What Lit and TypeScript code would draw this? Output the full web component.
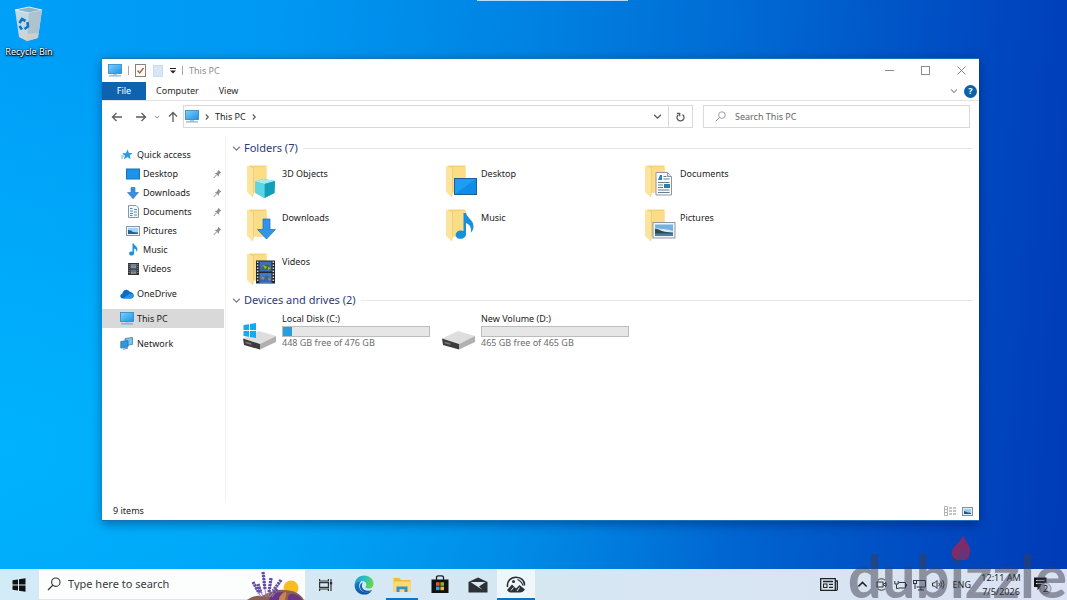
import { LitElement, html, css, nothing, TemplateResult } from "lit";
import { customElement, property } from "lit/decorators.js";

const monitor = (w = 14, h = 13) => html`<svg width=${w} height=${h} viewBox="0 0 14 13" aria-hidden="true">
  <defs><linearGradient id="scr" x1="0" y1="0" x2="1" y2="1"><stop offset="0" stop-color="#7fd0fb" /><stop offset="1" stop-color="#1c93e6" /></linearGradient></defs>
  <rect x="0.5" y="0.5" width="13" height="9" fill="url(#scr)" stroke="#2b86c5" stroke-width="0.8" />
  <rect x="5" y="10" width="4" height="1.4" fill="#b9c9d6" />
  <rect x="1" y="11.4" width="12" height="1" fill="#6f9dbd" />
</svg>`;

const navIcons: Record<string, TemplateResult> = {
  star: html`<svg width="12" height="12" viewBox="0 0 12 12"><path d="M6.600 0.600l1.300 3.300 3.600.1-2.700 2.400.9 3.900-3.200-2.200L2.800 10.600 4 6.700 1 4.600l3.900-.5z" fill="#2d9be0" /><path d="M0 7h3M0 9h2" stroke="#6ab8e8" stroke-width="1" /></svg>`,
  desktop: html`<svg width="14" height="12" viewBox="0 0 14 12"><rect x="0.500" y="1" width="13" height="10" fill="#1c93ea" stroke="#1473b8" /></svg>`,
  download: html`<svg width="12" height="12" viewBox="0 0 12 12"><path d="M4 0.500h4v5h3.500L6 11.700.5 5.500H4z" fill="#3a8fdc" stroke="#2374bd" stroke-width="0.600" /></svg>`,
  document: html`<svg width="11" height="13" viewBox="0 0 11 13"><path d="M0.500 0.500h7.500l2.500 2.500v9.500H0.500z" fill="#f4f8fb" stroke="#8897a3" /><path d="M2 3.500h2.500M6 4.500h3M2 6h3M6 7h3M2 8.500h3M6 10h3M2 10.500h2.500" stroke="#4c8cb5" /></svg>`,
  picture: html`<svg width="14" height="10" viewBox="0 0 14 10"><rect x="0.500" y="0.500" width="13" height="9" fill="#eef4f8" stroke="#8897a3" /><rect x="2" y="2" width="10" height="6" fill="#a9d2ef" /><path d="M2 4l3 .5 2 1.500 5 .5v1.500H2z" fill="#1f6297" /></svg>`,
  music: html`<svg width="11" height="13" viewBox="0 0 11 13"><path d="M4.500 0.500h1.200c.4 2 3.800 2.800 3.800 6 0 1-.4 1.800-1 2.500.2-2-.8-3-2.400-3.600v5c0 1.200-1.200 2.100-2.600 2.100S1 11.700 1 10.600s1.100-2 2.400-2c.4 0 .8.1 1.100.2z" fill="#1a93dc" /></svg>`,
  video: html`<svg width="11" height="12" viewBox="0 0 11 12"><rect width="11" height="12" fill="#2f3338" /><rect x="2.500" y="1" width="6" height="4.500" fill="#6d83a3" /><rect x="2.500" y="6.500" width="6" height="4.500" fill="#58719b" /><path d="M3 3l3 1 2-1.500v2.500H3zM3 9l3 .5 2-1v2H3z" fill="#b08c55" /><path d="M1.200 1v10M9.800 1v10" stroke="#aaa" stroke-width="0.800" stroke-dasharray="1 1" /></svg>`,
  cloud: html`<svg width="14" height="10" viewBox="0 0 14 10"><path d="M3 9.500C1.200 9.500.3 8.400.3 7.100.3 5.900 1.200 5 2.300 4.800 2.500 2.500 4.100.8 6.300.8c1.700 0 2.900.9 3.500 2.300 2.100 0 3.900 1.400 3.900 3.400 0 1.700-1.200 3-2.900 3z" fill="#0f6cc4" /><path d="M3 9.500l6.500-4.700c2.500-.2 4.200 1 4.200 2.300 0 1.500-1.300 2.400-2.900 2.400z" fill="#2496e8" /></svg>`,
  pc: monitor(),
  network: html`<svg width="14" height="13" viewBox="0 0 14 13"><path d="M5 1.500l7.500-1v7l-7.500 1z" fill="#7cc4ee" stroke="#3584b8" stroke-width="0.800" /><path d="M0.800 4.500l7.200-1v6.500l-7.200 1z" fill="#2f97dc" stroke="#2474ad" stroke-width="0.800" /><path d="M3 12.200l5-1" stroke="#5a8fb3" /></svg>`,
};

const folderBase = html`
  <svg width="34" height="36" viewBox="0 0 34 36">
    <path d="M3 1.500h17.500v27H3z" fill="#f6d272" />
    <path d="M8 3h12.500v25.500H8z" fill="#fbdd88" />
    <path d="M1 1.500l6.500 3v24l-1 4.500L1 28z" fill="#fde49c" />
    <path d="M7.500 4.500v24l-1 4.500" fill="none" stroke="#ecca74" stroke-width="0.700" />
  </svg>`;

const overlays: Record<string, TemplateResult> = {
  cube: html`<svg width="34" height="36" viewBox="0 0 34 36"><path d="M9.500 17.500l8-2.500 11.500 2-.5 12-10 5-9-5z" fill="#35bfd3" /><path d="M9.500 17.500l8-2.500 11.500 2-10.500 3z" fill="#a3edf4" /><path d="M18.500 20l10.500-3-.5 12-10 5z" fill="#149fb9" /><path d="M9.500 17.500l9 2.500v14l-9-5z" fill="#5cd5e4" /></svg>`,
  desktop: html`<svg width="34" height="36" viewBox="0 0 34 36"><rect x="9.500" y="14.500" width="22" height="16" fill="#1f9cf3" stroke="#1b5f94" /><path d="M10 30L31 15v15z" fill="#0f8ce8" /></svg>`,
  document: html`<svg width="34" height="36" viewBox="0 0 34 36"><path d="M12 8.500h11.500l4 4V31H12z" fill="#fbfdfe" stroke="#8d979f" /><path d="M23.500 8.500v4h4" fill="#dbe3e8" stroke="#8d979f" /><path d="M14 16l2-5h2v5z" fill="#3384ae" /><path d="M19.500 12.500h3M19.500 15h6M14 18.500h11.500M14 21h5M14 23.500h5M14 26h11.500M14 28.500h11.500" stroke="#5c7f96" /><rect x="20" y="20" width="6" height="4" fill="#2d7da6" /></svg>`,
  download: html`<svg width="34" height="36" viewBox="0 0 34 36"><path d="M17 11h7v10.500h5.500L20.500 31 11.500 21.500H17z" fill="#3393e4" stroke="#2377c0" stroke-width="0.800" /></svg>`,
  music: html`<svg width="34" height="36" viewBox="0 0 34 36"><path d="M18.500 5h2.500c1 5 7.500 7 7.500 13.500 0 2.500-1 4.500-2.500 6 .5-5-1-8-5-9.500v11c0 3-2.500 4.800-5.500 4.800s-4.800-1.500-4.800-3.900c0-2.500 2.300-4.400 5.200-4.400 1 0 1.900.2 2.600.6z" fill="#1790dc" /></svg>`,
  picture: html`<svg width="34" height="36" viewBox="0 0 34 36"><rect x="9" y="14.500" width="22" height="15.500" fill="#f1f4f6" stroke="#8d979f" /><rect x="11" y="16.500" width="18" height="11.500" fill="#77afe0" /><path d="M11 19.500c4 2 8 .5 18 3.500v1H11z" fill="#d5e9f5" /><path d="M11 20.500c3 0 6 3 12 3.500l6 1v3H11z" fill="#2c4d4e" /><path d="M11 25.500h18V28H11z" fill="#4c7f9e" /></svg>`,
  video: html`<svg width="34" height="36" viewBox="0 0 34 36"><rect x="10" y="8.500" width="19" height="23" fill="#23262b" /><rect x="13.500" y="9.500" width="12" height="10" fill="#3c6fb5" /><rect x="13.500" y="21" width="12" height="10" fill="#4379c2" /><path d="M14 17l4-2 2-3 3 1 2 5H14z" fill="#2c7a41" /><path d="M17 13l4 2-2 2zM22 15l3 1-3 2z" fill="#d8a428" /><path d="M14 28l4-2 2-3 3 2 2 5H14z" fill="#34679d" /><path d="M15 25l4 1-2 2zM22 26l3 1-2 2z" fill="#c58a3a" /><path d="M11.700 9.500v21M27.300 9.500v21" stroke="#d5d9dd" stroke-width="1.500" stroke-dasharray="1.500 1.500" /></svg>`,
};

const driveIcon = (windows: boolean) => html`<svg width="36" height="32" viewBox="0 0 36 32" aria-hidden="true">
  <path d="M1 18.500L17 11l17 5-16 8z" fill="#dedede" />
  <path d="M1 18.500L18 24v5.500L2 25z" fill="#3b3b3b" />
  <path d="M18 24l16-8v6l-16 7.500z" fill="#b0b0b0" />
  <path d="M3.500 21.500l6 1.700v1.800l-6-1.700z" fill="#777" />
  ${windows
    ? html`<svg width="36" height="32" viewBox="0 0 36 32"><path d="M1.500 5L7 4.200v5.800H1.500zM8 4L14 3v7H8zM1.500 11H7v5.800l-5.500-.8zM8 11h6v7l-6-1z" fill="#12aaf0" /></svg>`
    : nothing}
</svg>`;

const pin = html`<svg width="9" height="10" viewBox="0 0 9 10" aria-hidden="true"><path d="M5.200 0.700l3.200 3-1 .4-1.300 1.500-.2 2.100L1.700 3.900l2.100-.2L5 1.900z" fill="#8a9299" /><path d="M3.400 6L0.800 9" stroke="#8a9299" /></svg>`;

const chevron = (dir: "right" | "down" | "up", size = 8) => {
  const d = { right: "M2.800 1.500l2.500 2.500-2.500 2.500", down: "M1 2.500l3 3 3-3", up: "M1 5.500l3-3 3 3" }[dir];
  return html`<svg width=${size} height=${size} viewBox="0 0 8 8" aria-hidden="true"><path d=${d} fill="none" stroke="currentColor" stroke-width="1.100" /></svg>`;
};

const arrow = (rot: number) => html`<svg width="12" height="12" viewBox="0 0 12 12" aria-hidden="true"><path transform="rotate(${rot} 6 6)" d="M11 6H1.500M5.500 2l-4 4 4 4" fill="none" stroke="#5c5c5c" stroke-width="1.300" /></svg>`;

const magnifier = (size: number, color: string) => html`<svg width=${size} height=${size} viewBox="0 0 14 14" aria-hidden="true"><circle cx="8.800" cy="5.200" r="4.200" fill="none" stroke=${color} stroke-width="1.100" /><path d="M5.800 8.300L1 13" stroke=${color} stroke-width="1.200" /></svg>`;

interface NavEntry { label: string; icon: string; pinned?: boolean; child?: boolean; selected?: boolean; }

const navGroups: NavEntry[][] = [
  [
    { label: "Quick access", icon: "star" },
    { label: "Desktop", icon: "desktop", pinned: true, child: true },
    { label: "Downloads", icon: "download", pinned: true, child: true },
    { label: "Documents", icon: "document", pinned: true, child: true },
    { label: "Pictures", icon: "picture", pinned: true, child: true },
    { label: "Music", icon: "music", child: true },
    { label: "Videos", icon: "video", child: true },
  ],
  [{ label: "OneDrive", icon: "cloud" }],
  [{ label: "This PC", icon: "pc", selected: true }],
  [{ label: "Network", icon: "network" }],
];

const folders = [
  { label: "3D Objects", icon: "cube" },
  { label: "Desktop", icon: "desktop" },
  { label: "Documents", icon: "document" },
  { label: "Downloads", icon: "download" },
  { label: "Music", icon: "music" },
  { label: "Pictures", icon: "picture" },
  { label: "Videos", icon: "video" },
];

const drives = [
  { label: "Local Disk (C:)", free: 448, total: 476, windows: true },
  { label: "New Volume (D:)", free: 465, total: 465, windows: false },
];

const reset = css`
  * { box-sizing: border-box; }
  svg { display: block; flex: none; overflow: visible; }
  button, input { font: inherit; color: inherit; border: 0; padding: 0; margin: 0; background: none; outline: none; }
  button { display: flex; align-items: center; justify-content: center; flex: none; }
  a { color: inherit; text-decoration: none; }
`;

@customElement("nav-pane")
export class NavPane extends LitElement {
  static styles = [reset, css`
    :host { display: block; border-right: 1px solid #f3f3f3; padding-top: 9px; }
    .groups { display: flex; flex-direction: column; gap: 6px; }
    .row { display: flex; align-items: center; height: 19px; gap: 3px; padding: 0 2px 0 18px; margin-right: 1px; }
    .child { padding-left: 24px; }
    .selected { background: #d9d9d9; }
    .icon { width: 14px; display: flex; justify-content: center; flex: none; }
    .label { flex: 1; white-space: nowrap; }
  `];

  render() {
    return html`<nav class="groups" aria-label="Navigation">
      ${navGroups.map((g) => html`<div>${g.map((e) => html`
        <a href="#" class="row ${e.child ? "child" : ""} ${e.selected ? "selected" : ""}">
          <span class="icon">${navIcons[e.icon]}</span>
          <span class="label">${e.label}</span>
          ${e.pinned ? pin : nothing}
        </a>`)}</div>`)}
    </nav>`;
  }
}

@customElement("drive-tile")
export class DriveTile extends LitElement {
  @property() label = "";
  @property({ type: Number }) free = 0;
  @property({ type: Number }) total = 1;
  @property({ type: Boolean }) windows = false;

  static styles = [reset, css`
    :host { display: block; }
    .tile { display: flex; gap: 4px; height: 44px; }
    .art { padding-top: 9px; }
    .info { width: 148px; line-height: 12px; padding-top: 2px; white-space: nowrap; }
    .bar { height: 11px; border: 1px solid #bcbcbc; background: #e6e6e6; margin-top: 1px; }
    .used { height: 100%; background: #26a0da; }
    .free { color: #6d6d6d; }
  `];

  render() {
    const used = ((this.total - this.free) / this.total) * 100;
    return html`<a href="#" class="tile">
      <span class="art">${driveIcon(this.windows)}</span>
      <div class="info">
        <div>${this.label}</div>
        <div class="bar"><div class="used" style="width:${used}%"></div></div>
        <div class="free">${this.free} GB free of ${this.total} GB</div>
      </div>
    </a>`;
  }
}

@customElement("explorer-window")
export class ExplorerWindow extends LitElement {
  static styles = [reset, css`
    :host { display: flex; flex-direction: column; background: #fff; color: #1c1c1c; border: 1px solid #1673b5; border-width: 1px 0; box-shadow: 0 3px 10px rgba(0, 10, 60, 0.4); }
    .title { display: flex; align-items: center; height: 23px; padding-left: 6px; color: #8d8d8d; gap: 6px; flex: none; }
    .sep { width: 1px; height: 9px; background: #a5a5a5; }
    .qat { display: flex; align-items: center; gap: 7px; }
    .controls { display: flex; margin-left: auto; }
    .controls button { width: 36px; height: 22px; }
    .tabs { display: flex; height: 19px; border-bottom: 1px solid #e2e2e2; flex: none; color: #2b2b2b; }
    .tabs .file { width: 44px; background: #0f62ae; color: #fff; }
    .tabs .tab { padding: 0 10px; }
    .help { margin-left: auto; display: flex; align-items: center; gap: 6px; padding-right: 2px; color: #9a9a9a; }
    .badge { width: 13px; height: 13px; border-radius: 50%; background: #0c62a8; color: #fff; font-weight: 700; }
    .address { display: flex; align-items: center; height: 31px; flex: none; padding: 0 9px; }
    .arrows { display: flex; align-items: center; gap: 7px; color: #777; padding-right: 4px; }
    .back { margin-right: 5px; }
    .crumbs { flex: 1; display: flex; align-items: center; height: 23px; border: 1px solid #d9d9d9; color: #555; padding-left: 1px; }
    .trail { flex: 1; display: flex; align-items: center; gap: 4px; }
    .here { color: #1c1c1c; }
    .drop { width: 22px; height: 21px; }
    .refresh { width: 24px; height: 21px; border-left: 1px solid #d9d9d9; }
    .search { display: flex; align-items: center; gap: 9px; width: 267px; height: 23px; border: 1px solid #d9d9d9; margin-left: 10px; padding-left: 11px; color: #666; }
    .search input { flex: 1; min-width: 0; }
    .search input::placeholder { color: #666; opacity: 1; }
    .body { display: grid; grid-template-columns: 124px 1fr; flex: 1; min-height: 0; padding-top: 4px; }
    .content { padding: 4px 6px 0 6px; min-width: 0; }
    .heading { display: flex; align-items: center; gap: 3px; height: 16px; font-size: 11px; font-weight: 400; color: #2d3a78; margin: 0; white-space: nowrap; }
    .heading svg { color: #7a7f95; }
    .rule { flex: 1; height: 1px; background: #e6e6e6; margin-left: 2px; }
    .grid { display: grid; grid-template-columns: repeat(auto-fill, 199px); padding: 4px 0 0 10px; }
    .tile { display: flex; gap: 2px; height: 44px; padding-left: 4px; }
    .art { display: grid; align-self: start; padding-top: 4px; }
    .art > svg { grid-area: 1 / 1; }
    .name { padding-top: 8px; line-height: 12px; }
    .drives { padding-top: 3px; }
    .status { display: flex; align-items: center; height: 18px; padding: 0 6px 0 11px; flex: none; }
    .views { display: flex; align-items: center; gap: 6px; margin-left: auto; }
  `];

  render() {
    return html`
      <header class="title">
        ${monitor()}<span class="sep"></span>
        <div class="qat">
          <button aria-label="Properties"><svg width="11" height="13" viewBox="0 0 11 13"><rect x="0.500" y="0.500" width="10" height="12" fill="#fff" stroke="#8a8077" /><path d="M2.500 6.500l2.200 2.500 3.800-5" fill="none" stroke="#a8613a" stroke-width="1.400" /></svg></button>
          <button aria-label="New folder"><svg width="10" height="12" viewBox="0 0 10 12"><rect x="0.500" y="0.500" width="9" height="11" fill="#d7e6f4" stroke="#cbdcea" /></svg></button>
          <button aria-label="Customize toolbar"><svg width="6" height="6" viewBox="0 0 6 6"><path d="M0 0.500h6" stroke="#222" /><path d="M0 2.500h6L3 5.500z" fill="#222" /></svg></button>
        </div>
        <span class="sep"></span><span>This PC</span>
        <div class="controls">
          <button aria-label="Minimize"><svg width="9" height="9" viewBox="0 0 9 9"><path d="M0 4.500h9" stroke="#8a8a8a" /></svg></button>
          <button aria-label="Maximize"><svg width="9" height="9" viewBox="0 0 9 9"><rect x="0.500" y="0.500" width="8" height="8" fill="none" stroke="#8a8a8a" /></svg></button>
          <button aria-label="Close"><svg width="9" height="9" viewBox="0 0 9 9"><path d="M0.500 0.500l8 8M8.500 0.500l-8 8" stroke="#8a8a8a" /></svg></button>
        </div>
      </header>
      <div class="tabs">
        <button class="file">File</button>
        <button class="tab">Computer</button>
        <button class="tab">View</button>
        <div class="help">${chevron("down")}<button class="badge" aria-label="Help">?</button></div>
      </div>
      <div class="address">
        <div class="arrows">
          <button class="back" aria-label="Back">${arrow(0)}</button>
          <button aria-label="Forward">${arrow(180)}</button>
          <button aria-label="Recent locations">${chevron("down", 6)}</button>
          <button aria-label="Up">${arrow(90)}</button>
        </div>
        <div class="crumbs">
          <div class="trail">${monitor()}${chevron("right")}<button class="here">This PC</button>${chevron("right")}</div>
          <button class="drop" aria-label="Previous locations">${chevron("down", 9)}</button>
          <button class="refresh" aria-label="Refresh"><svg width="9" height="10" viewBox="0 0 9 10"><path d="M6.500 2.600A3.500 3.500 0 1 1 2.500 2.600M0.800 1.300h2.900v3" fill="none" stroke="#5c5c5c" stroke-width="1.300" /></svg></button>
        </div>
        <label class="search">${magnifier(11, "#909090")}<input type="text" aria-label="Search This PC" placeholder="Search This PC" /></label>
      </div>
      <div class="body">
        <nav-pane></nav-pane>
        <main class="content">
          <h2 class="heading">${chevron("down", 9)}<span>Folders (7)</span><span class="rule"></span></h2>
          <div class="grid">
            ${folders.map((f) => html`<a href="#" class="tile"><span class="art">${folderBase}${overlays[f.icon]}</span><span class="name">${f.label}</span></a>`)}
          </div>
          <h2 class="heading">${chevron("down", 9)}<span>Devices and drives (2)</span><span class="rule"></span></h2>
          <div class="grid drives">
            ${drives.map((d) => html`<drive-tile .label=${d.label} .free=${d.free} .total=${d.total} .windows=${d.windows}></drive-tile>`)}
          </div>
        </main>
      </div>
      <footer class="status">
        <span>9 items</span>
        <div class="views">
          <button aria-label="Details view"><svg width="12" height="10" viewBox="0 0 12 10"><path d="M0.500 0.500h3v9h-3zM0.500 3.500h3M0.500 6.500h3" fill="none" stroke="#a0a0a0" stroke-width="0.800" /><path d="M5 2h3M5 5h3M5 8h3M9 2h3M9 5h3M9 8h3" stroke="#8a8a8a" /></svg></button>
          <button aria-label="Large icons view"><svg width="11" height="9" viewBox="0 0 11 9"><rect x="0.500" y="0.500" width="10" height="8" fill="#e4eff7" stroke="#7d93a4" /><rect x="2" y="2" width="7" height="5" fill="#9ccbed" /><path d="M2 4l4 1.500 3 .5v1H2z" fill="#25547c" /></svg></button>
        </div>
      </footer>`;
  }
}

@customElement("task-bar")
export class TaskBar extends LitElement {
  static styles = [reset, css`
    :host { display: flex; align-items: stretch; height: 31px; background: linear-gradient(90deg, #d2ebf7, #d6e7f2 50%, #dbe2f3); color: #222; }
    .start { width: 38px; }
    .search { display: flex; align-items: center; gap: 7px; width: 268px; background: #fcfdfd; padding-left: 8px; font-size: 11px; border: 1px solid #dfe6ea; border-width: 0 1px 1px 1px; color: #3a3a3a; }
    .search input { flex: 1; min-width: 0; }
    .search input::placeholder { color: #3a3a3a; opacity: 1; }
    .apps { display: flex; padding-left: 1px; }
    .app { width: 38px; border-bottom: 2px solid transparent; border-top: 2px solid transparent; }
    .running { background: linear-gradient(#0f73c6, #0f73c6) bottom / 32px 2px no-repeat; background-origin: border-box; }
    .active { background: linear-gradient(#0f73c6, #0f73c6) bottom / 100% 2px no-repeat, #f0f7fb; background-origin: border-box; }
    .tray { display: flex; align-items: center; margin-left: auto; padding-right: 14px; }
    .small { width: 19px; height: 31px; }
    .news { margin-right: 14px; }
    .lang { padding: 0 8px 0 5px; }
    .clock { flex-direction: column; line-height: 14px; width: 44px; }
    .notice { margin-left: 10px; }
  `];

  render() {
    return html`
      <button class="start" aria-label="Start"><svg width="14" height="14" viewBox="0 0 14 14"><path d="M0.500 2.200L6 1.400V6.500H0.500zM7 1.300L13.500 0.300V6.500H7zM0.500 7.500H6v5.100L0.500 11.800zM7 7.500h6.500v6.200L7 12.700z" fill="#111" /></svg></button>
      <label class="search">
        ${magnifier(14, "#333")}
        <input type="text" aria-label="Type here to search" placeholder="Type here to search" />
        <svg width="60" height="31" viewBox="0 0 60 31" aria-hidden="true">
          <circle cx="46" cy="19" r="7.500" fill="#f8bb22" />
          <path d="M2 31c4-3 9-5 15-4 6-3 14-7 22-6 10 0 17 4 20 10z" fill="#8e5f55" />
          <path d="M24 31c1-5 7-8 14-8l-4 8zM43 31c-1-4 2-7 6-6 4 1 7 3 8 6z" fill="#6a3587" />
          <path d="M34 31c0-4 3-7 7-8 1 3-1 6-1 8z" fill="#c8844a" />
          <g fill="none" stroke="#9a86cc" stroke-width="1"><path d="M8 14l8 14M18 4l3 24M14 17l4 11M27 10l-4 18M37 11L25 28M33 20l-6 8" /></g>
          <g fill="none" stroke="#634b9f" stroke-width="3.200" stroke-dasharray="2.200 0.800"><path d="M8 13l6 11M18 3l2 17M13 15l3 9M26 9l-2 14M36 11l-8 11M32 20l-3 4" /></g>
        </svg>
      </label>
      <div class="apps">
        <button class="app" aria-label="Task View"><svg width="14" height="14" viewBox="0 0 14 14"><path d="M0.600 1v2h8.800V1M0.600 13v-2h8.800v2M0.600 4.600h8.800v4.800H0.600zM12 1v12" fill="none" stroke="#333" stroke-width="1.200" /><rect x="10.800" y="4" width="2.400" height="2.400" fill="#333" /></svg></button>
        <button class="app" aria-label="Microsoft Edge"><svg width="20" height="20" viewBox="0 0 20 20">
          <defs><linearGradient id="eg" x1="0" y1="0" x2="1" y2="0.300"><stop offset="0" stop-color="#199fde" /><stop offset="0.550" stop-color="#2bbfc0" /><stop offset="1" stop-color="#63d651" /></linearGradient><linearGradient id="eb" x1="0" y1="0" x2="0.600" y2="1"><stop offset="0" stop-color="#1b85d6" /><stop offset="1" stop-color="#0b4c9c" /></linearGradient></defs>
          <path d="M0.600 10C0.600 4.500 5 .6 10.200.6c5.500 0 9.300 3.900 9.300 8.100 0 3-2.200 4.900-4.700 4.900-1.900 0-3.400-.7-3.400-1.500 0-.5 1-1 1-2.500C12.400 7.500 10.300 6 7.600 6 4 6 1.500 8.200 0.600 10z" fill="url(#eg)" />
          <path d="M0.600 10C1.500 7.600 4 6 7.400 6c-1 .6-2.200 2.300-2.200 4.800 0 4 3.300 6.700 7.100 6.500 2.500 0 4.400-1 5.600-1.900-1.500 2.700-4.400 4.200-7.700 4.200C4.400 19.600 0.500 15.500 0.600 10z" fill="url(#eb)" />
          <path d="M9 7.500c-3 4 0 8.200 5 8.300 1.500 0 3-.4 4.200-1.100-1.400 2-4 3-6.500 2.700C7 17 4.500 12 7 8.500z" fill="#1060b5" />
        </svg></button>
        <button class="app running" aria-label="File Explorer"><svg width="18" height="16" viewBox="0 0 18 16"><path d="M0.500 1h6l1.500 2h9.500v12h-17z" fill="#f5b83d" /><path d="M0.500 4.500h17V15h-17z" fill="#fcd978" /><path d="M3.500 15V9.500h11V15h-3v-2.800h-5V15z" fill="#3c8fce" /></svg></button>
        <button class="app" aria-label="Microsoft Store"><svg width="18" height="19" viewBox="0 0 18 19"><path d="M5.500 5V2.500C5.500 1 6.500.8 7.500.8h3c1 0 2 .2 2 1.700V5" fill="none" stroke="#222" stroke-width="1.300" /><path d="M0.500 4.500h17V18h-17z" fill="#111" /><path d="M5 7.200h3.600v3.600H5z" fill="#e8532b" /><path d="M9.400 7.200H13v3.600H9.400z" fill="#7eb82a" /><path d="M5 11.600h3.600v3.600H5z" fill="#2ba1e0" /><path d="M9.400 11.600H13v3.600H9.400z" fill="#f7b51d" /></svg></button>
        <button class="app" aria-label="Mail"><svg width="20" height="16" viewBox="0 0 20 16"><path d="M0.500 5L10 .5 19.500 5v10.500h-19z" fill="#2b3137" /><path d="M2.500 5h15L11 9.500l3.500 3.200L8.500 9z" fill="#dcebf2" /></svg></button>
        <button class="app active" aria-label="Photos"><svg width="20" height="17" viewBox="0 0 20 17">
          <path d="M1.600 11C0.600 5.500 4.500 1.200 10 1.200c5.500 0 8.800 3.600 8.400 8.300" fill="none" stroke="#2b3137" stroke-width="1.600" />
          <path d="M1 14l5-5.500 4 4 3.500-3.500 5.500 4.500c-1.500 2-3 3-5 3H5.500c-2 0-3.500-.8-4.500-2.500z" fill="#2b3137" />
          <path d="M5 14.500l2.500-3M11 15l2.500-3.500" stroke="#e9f2f7" fill="none" />
          <circle cx="7.500" cy="5.500" r="1.500" fill="#2b3137" /><path d="M11.500 3.500c2.500 1 4.500 3 5.500 6" fill="none" stroke="#2b3137" stroke-width="1.200" />
        </svg></button>
      </div>
      <div class="tray">
        <button class="small news" aria-label="News"><svg width="18" height="13" viewBox="0 0 18 13"><path d="M0.700 0.700h14.600v11.600H0.700zM15.300 3h2v8.500q0 .8-1 .8h-1" fill="none" stroke="#222" stroke-width="1.300" /><path d="M3 3.500h10M9 6.300h4M9 9.300h4" stroke="#222" stroke-width="1.300" /><rect x="3.500" y="6" width="3.500" height="3.500" fill="none" stroke="#222" /></svg></button>
        <button class="small" aria-label="Hidden icons">${chevron("up", 11)}</button>
        <button class="small" aria-label="Meet Now"><svg width="11" height="13" viewBox="0 0 11 13"><path d="M2 2.200C3.500.3 7.500.3 9 2.200M2 10.800c1.500 1.900 5.500 1.900 7 0" fill="none" stroke="#333" /><rect x="1" y="4" width="6" height="5" fill="none" stroke="#333" /><path d="M7 6.500l3-2v4z" fill="none" stroke="#333" /></svg></button>
        <button class="small" aria-label="Battery"><svg width="13" height="10" viewBox="0 0 13 10"><path d="M4.500 2.500h7v5.500h-7M12.500 4v2.500" fill="none" stroke="#333" /><path d="M2.500 4.500v4h2M0.800 1v3h3.400V1" fill="none" stroke="#333" /></svg></button>
        <button class="small" aria-label="Network"><svg width="13" height="12" viewBox="0 0 13 12"><path d="M4 1.500h8.500v6.500H3.500M5 11h6M8 8v3" fill="none" stroke="#333" /><rect x="0.500" y="1.500" width="3" height="3" fill="none" stroke="#333" /><path d="M2 4.500V10" stroke="#333" /></svg></button>
        <button class="small" aria-label="Volume"><svg width="13" height="11" viewBox="0 0 13 11"><path d="M0.500 4h2l2.500-2.500v8L2.500 7h-2z" fill="none" stroke="#333" /><path d="M6.800 3.800q1.200 1.700 0 3.400M8.700 2.500q2 3 0 6M10.600 1q3 4.500 0 9" fill="none" stroke="#333" /></svg></button>
        <button class="lang">ENG</button>
        <button class="clock"><span>12:11 AM</span><span>7/5/2026</span></button>
        <button class="notice" aria-label="2 notifications"><svg width="20" height="20" viewBox="0 0 20 20"><path d="M1 2.500h12.500v9.500H7.500L4.500 15v-3H1z" fill="#151515" /><path d="M3 5.500h8.500M3 8.500h8.500" stroke="#d8dfee" /><circle cx="12.500" cy="13.500" r="5.500" fill="#c3cad8" stroke="#8a93a5" /><text x="12.500" y="17" font-size="9" text-anchor="middle" fill="#111">2</text></svg></button>
      </div>`;
  }
}

@customElement("app-root")
export class AppRoot extends LitElement {
  static styles = [reset, css`
    :host { display: flex; flex-direction: column; position: relative; height: 100vh; overflow: hidden; font-family: "Noto Sans", "Open Sans", sans-serif; font-size: 9px; line-height: 12px;
      background: radial-gradient(ellipse 70% 70% at 0% 75%, rgba(0, 184, 255, 0.8), rgba(0, 184, 255, 0) 100%), linear-gradient(95deg, #009ff8 0%, #0098f2 25%, #0082e2 48%, #0068d2 68%, #004cc2 86%, #003ab6 100%); }
    .desktop { position: relative; flex: 1; min-height: 0; }
    .strip { position: absolute; top: 0; left: 477px; width: 151px; height: 1px; background: #b8dcf4; }
    .shortcut { position: absolute; left: 2px; top: 6px; width: 54px; display: flex; flex-direction: column; align-items: center; gap: 3px; color: #fff; text-shadow: 0 1px 1px #000, 0 0 2px #000, 1px 1px 2px #000; white-space: nowrap; }
    .window { position: absolute; left: 102px; top: 58px; right: 88px; bottom: 48px; }
    .mark { position: absolute; right: 0; bottom: -5px; z-index: 2; pointer-events: none; font-family: Lato, sans-serif; font-weight: 700; font-size: 60px; line-height: 60px; color: rgba(60, 62, 80, 0.5); }
    .flame { position: absolute; right: 96px; bottom: 39px; z-index: 3; }
  `];

  render() {
    return html`
      <div class="desktop">
        <div class="strip"></div>
        <a href="#" class="shortcut">
          <svg width="32" height="37" viewBox="0 0 32 37" aria-hidden="true">
            <path d="M2 4l14-3 13 3-4 28-11 3-8-4z" fill="#c9dce6" opacity="0.950" />
            <path d="M2 4l14-3 13 3-13 3z" fill="#8fb4c8" stroke="#eef7fb" stroke-width="0.800" />
            <path d="M16 7l13-3-4 28-11 3z" fill="#adc3cf" />
            <path d="M6 27l8 1 11-1-.6 5L14 35l-7.500-4z" fill="#d9cfc8" opacity="0.800" />
            <g fill="none" stroke="#1273c4" stroke-width="2.600"><path d="M6.500 17l2.500-4 3.500 2" /><path d="M14.500 16l.5 4.500-3.500 2.500" /><path d="M9 23.500L6.500 20" /></g>
          </svg>
          <span>Recycle Bin</span>
        </a>
        <explorer-window class="window"></explorer-window>
      </div>
      <task-bar></task-bar>
      <div class="mark">dubizzle</div>
      <svg class="flame" width="20" height="27" viewBox="0 0 20 27" aria-hidden="true"><path d="M12 0c0 5 6 9 7 15 .600 4-1 8-3 11H6C3 24 0 22 0.500 18 1.500 12 11 8 12 0z" fill="#a8234f" opacity="0.750" /><path d="M7 26c-3-4 4-7 5-12 3 5 3 8 1 12z" fill="#4a3f90" opacity="0.600" /></svg>`;
  }
}
